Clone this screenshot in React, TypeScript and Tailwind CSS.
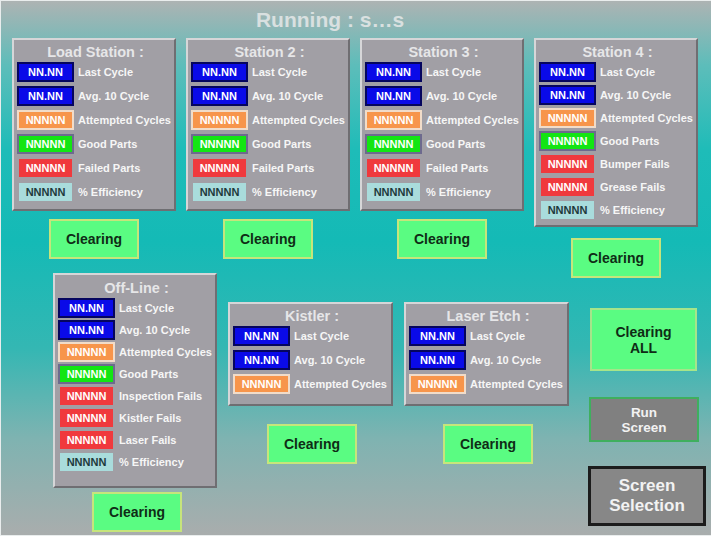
import React from 'react';

type Kind = 'blue' | 'orange' | 'green' | 'red' | 'cyan';

interface Row {
  kind: Kind;
  label: string;
}

const badgeClass: Record<Kind, string> = {
  blue: 'w-[57px] h-[20px] bg-[#0a0ae8] border-2 border-[#05055e] text-white',
  orange: 'w-[57px] h-[20px] bg-[#f7954b] border-2 border-[#f1dcc9] text-white',
  green: 'w-[57px] h-[20px] bg-[#13e513] border-2 border-[#6d6a8e] text-white',
  red: 'w-[53px] h-[18px] bg-[#f0393d] text-white',
  cyan: 'w-[53px] h-[18px] bg-[#a9dcdc] text-[#1e3a3c]',
};

const cycles: Row[] = [
  { kind: 'blue', label: 'Last Cycle' },
  { kind: 'blue', label: 'Avg. 10 Cycle' },
  { kind: 'orange', label: 'Attempted Cycles' },
];

const stdRows: Row[] = [
  ...cycles,
  { kind: 'green', label: 'Good Parts' },
  { kind: 'red', label: 'Failed Parts' },
  { kind: 'cyan', label: '% Efficiency' },
];

const station4Rows: Row[] = [
  ...cycles,
  { kind: 'green', label: 'Good Parts' },
  { kind: 'red', label: 'Bumper Fails' },
  { kind: 'red', label: 'Grease Fails' },
  { kind: 'cyan', label: '% Efficiency' },
];

const offLineRows: Row[] = [
  ...cycles,
  { kind: 'green', label: 'Good Parts' },
  { kind: 'red', label: 'Inspection Fails' },
  { kind: 'red', label: 'Kistler Fails' },
  { kind: 'red', label: 'Laser Fails' },
  { kind: 'cyan', label: '% Efficiency' },
];

const Badge: React.FC<{ kind: Kind }> = ({ kind }) => (
  <div className="w-[57px] h-[20px] flex items-center justify-center shrink-0">
    <div className={`${badgeClass[kind]} flex items-center justify-center text-[11px] font-bold leading-none`}>
      {kind === 'blue' ? 'NN.NN' : 'NNNNN'}
    </div>
  </div>
);

interface PanelProps {
  title: string;
  rows: Row[];
  width: string;
  gap: string;
  top: string;
  bottom: string;
}

const Panel: React.FC<PanelProps> = ({ title, rows, width, gap, top, bottom }) => (
  <div
    className={`${width} ${top} ${bottom} bg-[#a19fa5] border-2 border-t-[#d6d6d8] border-l-[#d6d6d8] border-r-[#6f6e72] border-b-[#6f6e72] pl-[3px] flex flex-col`}
  >
    <div className="h-[20px] flex items-center justify-center text-[14.5px] font-bold text-[#e6e6e8] leading-none">
      {title}
    </div>
    <div className={`flex flex-col ${gap}`}>
      {rows.map((r, i) => (
        <div key={i} className="h-[20px] flex items-center gap-[4px]">
          <Badge kind={r.kind} />
          <span className="text-[11px] font-bold text-[#f6f6f6] whitespace-nowrap leading-none">{r.label}</span>
        </div>
      ))}
    </div>
  </div>
);

const Clearing: React.FC<{ className?: string }> = ({ className = '' }) => (
  <div
    className={`w-[90px] h-[40px] bg-[#5afc82] border-2 border-[#c6e57b] flex items-center justify-center text-[14px] font-bold text-[#0f2c16] ${className}`}
  >
    Clearing
  </div>
);

export default function App() {
  return (
    <div className="w-[711px] h-[536px] overflow-hidden border-t border-l border-b border-[#e9eded] bg-[linear-gradient(to_bottom,#adb3b3_0%,#5dbdba_12%,#1ebcb8_28%,#14bab6_45%,#34b7b3_65%,#7fb3b1_82%,#a9adad_100%)] font-['Liberation_Sans',Arial,sans-serif] flex flex-col">
      {/* header */}
      <div className="h-[37px] shrink-0 flex items-center justify-center pr-[52px]">
        <span className="text-[21px] font-bold text-[#d9e0e0] leading-none">Running : s…s</span>
      </div>

      {/* stations row */}
      <div className="h-[235px] shrink-0 flex items-start pl-[11px] gap-[10px]">
        {[
          { t: 'Load Station :' },
          { t: 'Station 2 :' },
          { t: 'Station 3 :' },
        ].map((s) => (
          <div key={s.t} className="w-[164px] flex flex-col items-center">
            <Panel title={s.t} rows={stdRows} width="w-[164px]" gap="gap-[4px]" top="pt-[2px]" bottom="pb-[7px]" />
            <Clearing className="mt-[8px]" />
          </div>
        ))}
        <div className="w-[164px] flex flex-col items-center">
          <Panel title="Station 4 :" rows={station4Rows} width="w-[164px]" gap="gap-[3px]" top="pt-[2px]" bottom="pb-[5px]" />
          <Clearing className="mt-[11px]" />
        </div>
      </div>

      {/* lower row */}
      <div className="flex items-start pl-[52px]">
        <div className="w-[164px] flex flex-col items-center">
          <Panel title="Off-Line :" rows={offLineRows} width="w-[164px]" gap="gap-[2px]" top="pt-[3px]" bottom="pb-[14px]" />
          <Clearing className="mt-[4px] ml-[4px]" />
        </div>

        <div className="w-[165px] ml-[11px] mt-[29px] flex flex-col items-center">
          <Panel title="Kistler :" rows={cycles} width="w-[165px]" gap="gap-[4px]" top="pt-[2px]" bottom="pb-[10px]" />
          <Clearing className="mt-[18px] ml-[3px]" />
        </div>

        <div className="w-[165px] ml-[11px] mt-[29px] flex flex-col items-center">
          <Panel title="Laser Etch :" rows={cycles} width="w-[165px]" gap="gap-[4px]" top="pt-[2px]" bottom="pb-[10px]" />
          <Clearing className="mt-[18px] ml-[3px]" />
        </div>

        <div className="ml-[19px] flex flex-col items-start">
          <div className="ml-[2px] mt-[35px] w-[107px] h-[63px] bg-[#5afc82] border-2 border-[#a6e58a] flex flex-col items-center justify-center text-[14px] font-bold text-[#0f2c16] leading-[16px]">
            <span>Clearing</span>
            <span>ALL</span>
          </div>
          <div className="ml-[1px] mt-[26px] w-[110px] h-[45px] bg-[#808080] border-2 border-[#3faf5e] flex flex-col items-center justify-center text-[13.5px] font-bold text-[#f2f2f2] leading-[15px]">
            <span>Run</span>
            <span>Screen</span>
          </div>
          <div className="mt-[24px] w-[118px] h-[60px] bg-[#878787] border-[3px] border-[#1c1c1c] flex flex-col items-center justify-center text-[17px] font-bold text-[#f2f2f2] leading-[20px]">
            <span>Screen</span>
            <span>Selection</span>
          </div>
        </div>
      </div>
    </div>
  );
}
